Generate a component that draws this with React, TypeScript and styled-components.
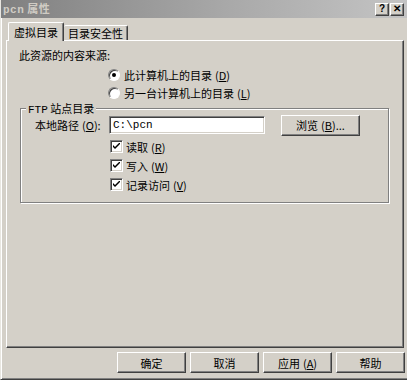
import React from 'react';
import styled, { createGlobalStyle } from 'styled-components';

const GlobalStyle = createGlobalStyle`
  html, body {
    margin: 0;
    padding: 0;
    background: #d4d0c8;
  }
  body {
    font-family: 'Noto Sans CJK SC', 'Liberation Sans', sans-serif;
    font-size: 11px;
    color: #000;
  }
`;

const Window = styled.div`
  width: 407px;
  height: 380px;
  box-sizing: border-box;
  display: flex;
  flex-direction: column;
  background: #d4d0c8;
  border-left: 1px solid #e8e6e0;
  border-bottom: 1px solid #404040;
  box-shadow: inset 1px 0 0 #fff, inset 0 -1px 0 #808080;
`;

const TitleBar = styled.div`
  height: 18px;
  display: flex;
  align-items: center;
  justify-content: space-between;
  padding: 0 3px 0 2px;
  background: linear-gradient(to right, #808080 0%, #a8a8a8 55%, #c4c4c4 100%);
`;

const TitleText = styled.span`
  color: #d0ccc4;
  font-weight: bold;
  font-size: 11px;
  letter-spacing: 0.5px;
  line-height: 18px;
`;

const Mono = styled.span`
  font-family: 'Liberation Mono', monospace;
`;

const CaptionButtons = styled.div`
  display: flex;
  gap: 1px;
`;

const CaptionButton = styled.div`
  width: 12px;
  height: 11px;
  background: #d4d0c8;
  border-top: 1px solid #fff;
  border-left: 1px solid #fff;
  border-right: 1px solid #404040;
  border-bottom: 1px solid #404040;
  box-shadow: inset -1px -1px 0 #808080;
  display: flex;
  align-items: center;
  justify-content: center;
  font-family: 'Liberation Sans', sans-serif;
  font-weight: bold;
  font-size: 10px;
  line-height: 1;
`;

const Body = styled.div`
  flex: 1;
  display: flex;
  flex-direction: column;
  padding: 4px 3px 6px 5px;
  min-height: 0;
`;

const TabStrip = styled.div`
  height: 18px;
  display: flex;
  align-items: flex-end;
  padding-left: 2px;
  position: relative;
  z-index: 1;
`;

const Tab = styled.div<{ $active?: boolean }>`
  box-sizing: border-box;
  height: ${p => (p.$active ? '19px' : '15px')};
  margin-bottom: ${p => (p.$active ? '-1px' : '0')};
  padding: ${p => (p.$active ? '2px 5px 0 5px' : '0 4px 0 4px')};
  background: #d4d0c8;
  border-top: 1px solid #fff;
  border-left: ${p => (p.$active ? '1px solid #fff' : 'none')};
  border-right: 1px solid #404040;
  box-shadow: inset -1px 0 0 #808080;
  border-radius: 2px 2px 0 0;
  font-size: 11px;
  line-height: 14px;
  white-space: nowrap;
`;

const Panel = styled.div`
  flex: 1;
  box-sizing: border-box;
  border-top: 1px solid #fff;
  border-left: 1px solid #fff;
  border-right: 1px solid #404040;
  border-bottom: 1px solid #404040;
  box-shadow: inset -1px -1px 0 #808080;
  padding: 7px 14px 0 12px;
  display: flex;
  flex-direction: column;
`;

const Heading = styled.div`
  line-height: 14px;
  height: 14px;
`;

const RadioList = styled.div`
  display: flex;
  flex-direction: column;
  margin: 4px 0 0 89px;
`;

const OptionRow = styled.div`
  display: flex;
  align-items: center;
  height: 18px;
  gap: 4px;
`;

const Radio = styled.span<{ $checked?: boolean }>`
  width: 12px;
  height: 12px;
  box-sizing: border-box;
  border-radius: 50%;
  background: #fff;
  border: 1px solid;
  border-color: #808080 #fff #fff #808080;
  box-shadow: inset 1px 1px 0 #404040;
  display: flex;
  align-items: center;
  justify-content: center;
  flex-shrink: 0;

  &::after {
    content: '';
    width: 4px;
    height: 4px;
    border-radius: 50%;
    background: ${p => (p.$checked ? '#000' : 'transparent')};
  }
`;

const Group = styled.div`
  position: relative;
  box-sizing: border-box;
  margin: 6px 0 0 1px;
  height: 95px;
  border: 1px solid #808080;
  box-shadow: inset 1px 1px 0 #fff, 1px 1px 0 #fff;
  padding: 5px 0 0 14px;
  display: flex;
  flex-direction: column;
`;

const Legend = styled.span`
  position: absolute;
  top: -8px;
  left: 5px;
  padding: 0 2px;
  background: #d4d0c8;
  line-height: 14px;
`;

const PathRow = styled.div`
  display: flex;
  align-items: center;
  height: 22px;
`;

const PathLabel = styled.span`
  width: 74px;
  white-space: nowrap;
`;

const PathInput = styled.div`
  width: 156px;
  height: 18px;
  box-sizing: border-box;
  background: #fff;
  border: 1px solid;
  border-color: #808080 #fff #fff #808080;
  box-shadow: inset 1px 1px 0 #404040, inset -1px -1px 0 #d4d0c8;
  padding: 2px 3px 0;
  font-family: 'Liberation Mono', monospace;
  font-size: 11px;
  line-height: 13px;
`;

const Button = styled.div<{ $w?: number }>`
  width: ${p => p.$w ?? 69}px;
  height: 21px;
  box-sizing: border-box;
  background: #d4d0c8;
  border-top: 1px solid #fff;
  border-left: 1px solid #fff;
  border-right: 1px solid #404040;
  border-bottom: 1px solid #404040;
  box-shadow: inset -1px -1px 0 #808080;
  display: flex;
  align-items: center;
  justify-content: center;
  white-space: nowrap;
  line-height: 14px;
`;

const BrowseButton = styled(Button)`
  margin-left: 16px;
`;

const CheckList = styled.div`
  display: flex;
  flex-direction: column;
  margin: 1px 0 0 75px;
`;

const CheckRow = styled(OptionRow)`
  height: 19px;
  gap: 3px;
`;

const CheckBox = styled.span`
  width: 13px;
  height: 13px;
  box-sizing: border-box;
  background: #fff;
  border: 1px solid;
  border-color: #808080 #fff #fff #808080;
  box-shadow: inset 1px 1px 0 #404040, inset -1px -1px 0 #d4d0c8;
  display: flex;
  align-items: center;
  justify-content: center;
  flex-shrink: 0;
`;

const ButtonRow = styled.div`
  display: flex;
  justify-content: flex-end;
  gap: 4px;
  margin: 4px -1px 0 0;
`;

const Key = styled.span`
  margin-left: 3px;
  u {
    text-decoration: underline;
  }
`;

const Check = () => (
  <CheckBox>
    <svg width="7" height="7" viewBox="0 0 7 7">
      <path d="M0 2 L0 4 L2 6 L7 1 L7 -1 L2 4 Z" fill="#000" />
    </svg>
  </CheckBox>
);

const Mn: React.FC<{ k: string }> = ({ k }) => (
  <Key>
    (<u>{k}</u>)
  </Key>
);

const App: React.FC = () => {
  const checks = [
    { label: '读取', key: 'R' },
    { label: '写入', key: 'W' },
    { label: '记录访问', key: 'V' },
  ];

  return (
    <>
      <GlobalStyle />
      <Window>
        <TitleBar>
          <TitleText>
            <Mono>pcn</Mono> 属性
          </TitleText>
          <CaptionButtons>
            <CaptionButton>?</CaptionButton>
            <CaptionButton>✕</CaptionButton>
          </CaptionButtons>
        </TitleBar>
        <Body>
          <TabStrip>
            <Tab $active>虚拟目录</Tab>
            <Tab>目录安全性</Tab>
          </TabStrip>
          <Panel>
            <Heading>此资源的内容来源:</Heading>
            <RadioList>
              <OptionRow>
                <Radio $checked />
                <span>
                  此计算机上的目录<Mn k="D" />
                </span>
              </OptionRow>
              <OptionRow>
                <Radio />
                <span>
                  另一台计算机上的目录<Mn k="L" />
                </span>
              </OptionRow>
            </RadioList>
            <Group>
              <Legend>
                <Mono>FTP</Mono> 站点目录
              </Legend>
              <PathRow>
                <PathLabel>
                  本地路径<Mn k="O" />:
                </PathLabel>
                <PathInput>C:\pcn</PathInput>
                <BrowseButton $w={79}>
                  浏览<Mn k="B" />...
                </BrowseButton>
              </PathRow>
              <CheckList>
                {checks.map(c => (
                  <CheckRow key={c.key}>
                    <Check />
                    <span>
                      {c.label}
                      <Mn k={c.key} />
                    </span>
                  </CheckRow>
                ))}
              </CheckList>
            </Group>
          </Panel>
          <ButtonRow>
            <Button>确定</Button>
            <Button>取消</Button>
            <Button>
              应用<Mn k="A" />
            </Button>
            <Button>帮助</Button>
          </ButtonRow>
        </Body>
      </Window>
    </>
  );
};

export default App;
